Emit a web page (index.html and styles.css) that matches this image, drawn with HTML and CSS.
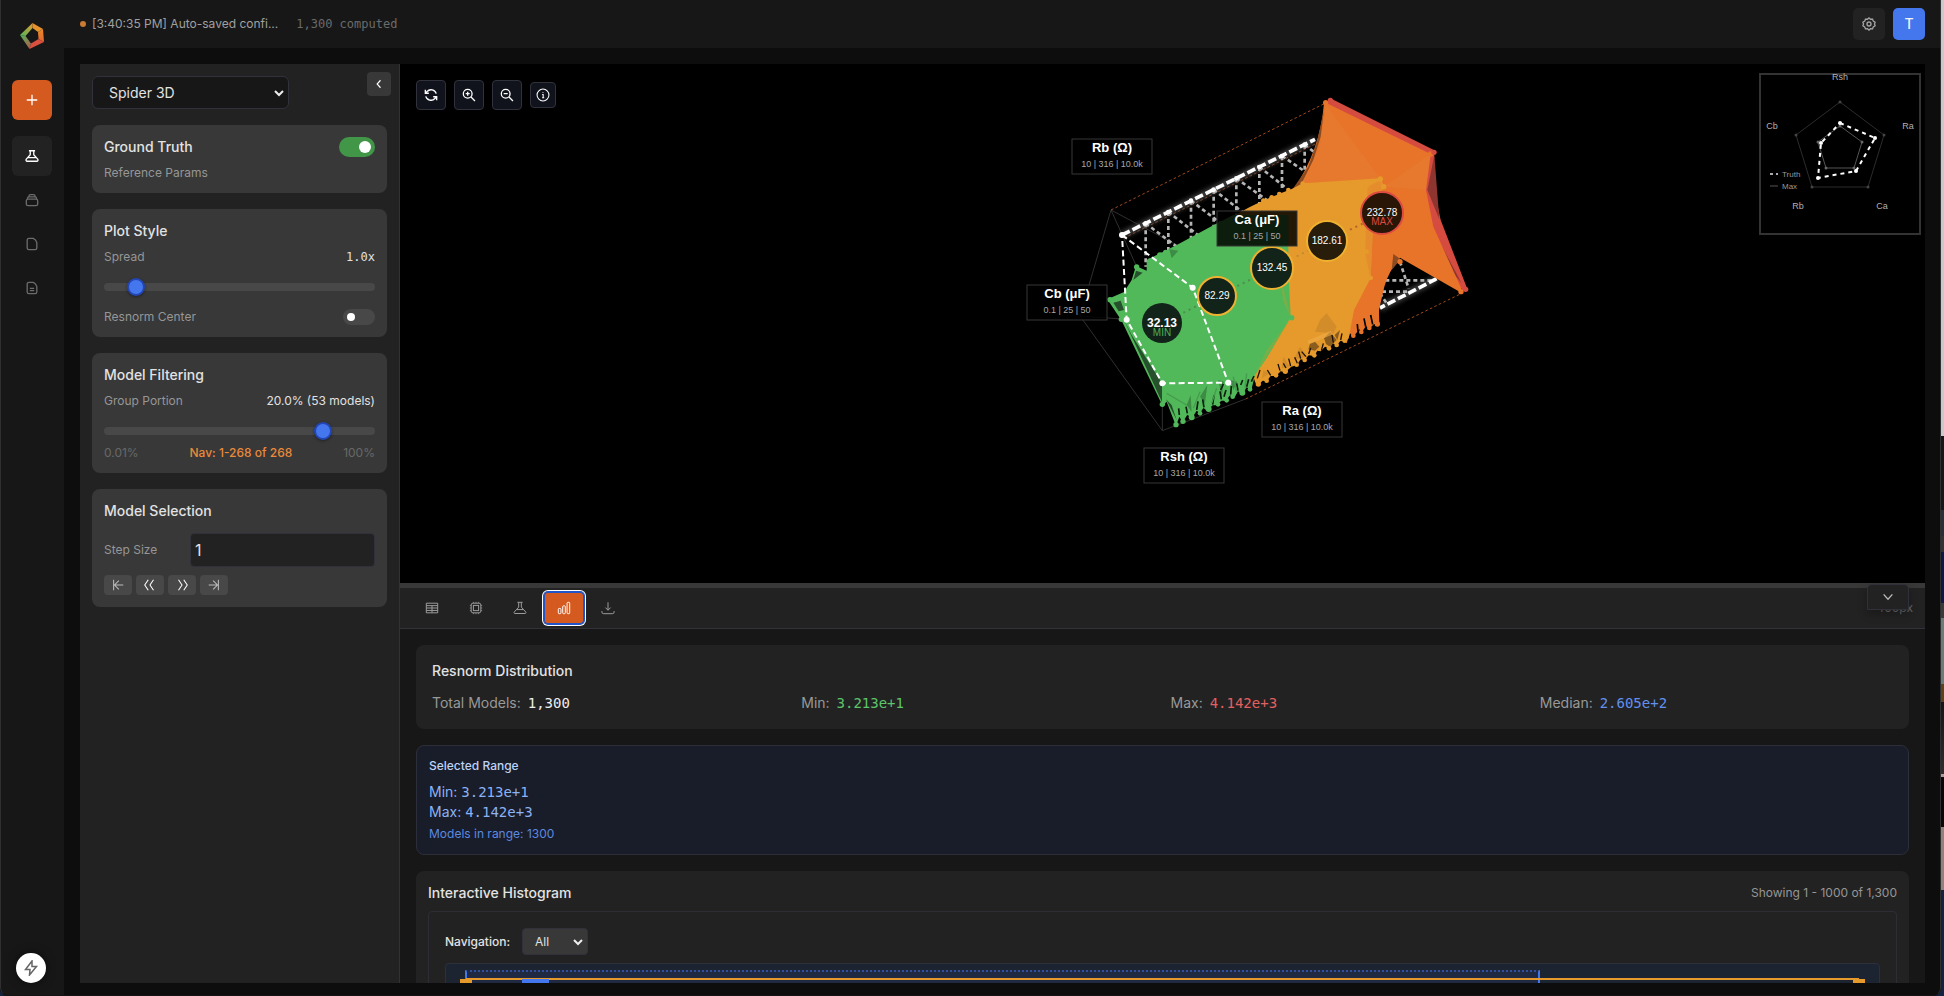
FILE: index.html
```html
<!DOCTYPE html>
<html lang="en">
<head>
<meta charset="utf-8">
<title>Spider 3D</title>
<link rel="stylesheet" href="styles.css">
</head>
<body>
<div class="window">
  <nav class="rail" aria-label="Main">
    <svg class="logo" viewBox="0 0 24 26" aria-hidden="true">
      <defs>
        <linearGradient id="lg1" x1="0" y1="1" x2="1" y2="0"><stop offset="0" stop-color="#4fb85a"/><stop offset="1" stop-color="#e39a2f"/></linearGradient>
        <linearGradient id="lg2" x1="0" y1="0" x2="0" y2="1"><stop offset="0" stop-color="#e8892c"/><stop offset="1" stop-color="#e5652e"/></linearGradient>
        <linearGradient id="lg3" x1="0" y1="0" x2="1" y2="1"><stop offset="0" stop-color="#4fb85a"/><stop offset="1" stop-color="#b8564a"/></linearGradient>
      </defs>
      <path d="M0 12 12.500 0 12.500 5 5.500 13z" fill="url(#lg1)"/>
      <path d="M12.500 0 23 6 18 9 12.500 5z" fill="#e6922d"/>
      <path d="M23 6 24 19 18.500 16 18 9z" fill="url(#lg2)"/>
      <path d="M24 19 9.500 26 11 20.500 18.500 16z" fill="#d9503f"/>
      <path d="M9.500 26 0 12 5.500 13 11 20.500z" fill="url(#lg3)"/>
    </svg>
    <button class="rail-btn rail-add" aria-label="New"><svg class="ico" viewBox="0 0 16 16"><path d="M8 2v12M2 8h12"/></svg></button>
    <button class="rail-btn rail-on" aria-label="Lab"><svg class="ico" viewBox="0 0 16 16"><path d="M4.500 2h7M6 2v4.500L1.500 11.500c-.8 1-.3 2.500 1 2.500h11c1.300 0 1.800-1.500 1-2.500L10 6.500V2M3.500 9.800h9"/></svg></button>
    <button class="rail-btn" aria-label="Collections"><svg class="ico" viewBox="0 0 16 16"><path d="M1.500 9a2 2 0 0 1 2-2h9a2 2 0 0 1 2 2v3.500a2 2 0 0 1-2 2h-9a2 2 0 0 1-2-2zM2.800 7V6a1.800 1.800 0 0 1 1.800-1.600h6.800A1.800 1.800 0 0 1 13.200 6v1M4.500 4.300v-.8a1.800 1.800 0 0 1 1.800-1.600h3.400a1.800 1.800 0 0 1 1.800 1.600v.8"/></svg></button>
    <button class="rail-btn" aria-label="File"><svg class="ico" viewBox="0 0 16 16"><path d="M4.500 1.500h5c2 1 3.500 2.800 4 5v6a2 2 0 0 1-2 2h-7a2 2 0 0 1-2-2v-9a2 2 0 0 1 2-2z"/></svg></button>
    <button class="rail-btn" aria-label="Report"><svg class="ico" viewBox="0 0 16 16"><path d="M4.500 1.500h5c2 1 3.500 2.800 4 5v6a2 2 0 0 1-2 2h-7a2 2 0 0 1-2-2v-9a2 2 0 0 1 2-2zM5.500 8.500h5M5.500 11h5"/></svg></button>
    <button class="bolt" aria-label="Quick actions"><svg viewBox="0 0 16 16"><path d="M9 1 2.500 9.500H7L6.500 15 13.500 6.500H9z"/></svg></button>
  </nav>
  <div class="page">
    <header class="topbar">
      <span class="dot"></span>
      <span class="status">[3:40:35 PM] Auto-saved confi...</span>
      <span class="computed">1,300 computed</span>
      <button class="top-btn" aria-label="Settings"><svg class="ico" viewBox="0 0 16 16"><path d="M8 1 9.700 2.600 12.100 2.500 12.900 4.700 15 6 14.200 8 15 10 12.900 11.300 12.100 13.500 9.700 13.400 8 15 6.300 13.400 3.900 13.500 3.100 11.300 1 10 1.800 8 1 6 3.100 4.700 3.900 2.500 6.300 2.600z"/><circle cx="8" cy="8" r="2.300"/></svg></button>
      <button class="top-btn avatar">T</button>
    </header>
    <main class="main">
      <aside class="side">
        <div class="side-head">
          <select class="mode" aria-label="Visualization"><option>Spider 3D</option></select>
          <button class="collapse" aria-label="Collapse panel"><svg viewBox="0 0 16 16"><path d="M10 3 5.500 8l4.500 5"/></svg></button>
        </div>
        <section class="card">
          <div class="row"><label class="card-title" for="gt">Ground Truth</label><input class="switch" type="checkbox" id="gt" checked></div>
          <div class="muted gap-top">Reference Params</div>
        </section>
        <section class="card">
          <h2 class="card-title">Plot Style</h2>
          <div class="row gap-top"><label class="muted" for="spread">Spread</label><output class="mono-val">1.0x</output></div>
          <input class="slider" type="range" id="spread" min="0" max="100" value="9">
          <div class="row after-slider"><label class="muted" for="rc">Resnorm Center</label><input class="switch small" type="checkbox" id="rc"></div>
        </section>
        <section class="card">
          <h2 class="card-title">Model Filtering</h2>
          <div class="row gap-top"><label class="muted" for="portion">Group Portion</label><output class="val">20.0% (53 models)</output></div>
          <input class="slider" type="range" id="portion" min="0" max="100" value="83">
          <div class="row scale"><span>0.01%</span><span class="nav-note">Nav: 1-268 of 268</span><span>100%</span></div>
        </section>
        <section class="card">
          <h2 class="card-title">Model Selection</h2>
          <div class="row step"><label class="muted" for="step">Step Size</label><input class="step-input" id="step" type="text" value="1"></div>
          <div class="steps">
            <button aria-label="First"><svg viewBox="0 0 16 16"><path d="M3 2v12M14 8H4M9 3 4 8l5 5"/></svg></button>
            <button class="strong" aria-label="Back"><svg viewBox="0 0 16 16"><path d="M6 2 2 8l4 6M12 2 8 8l4 6"/></svg></button>
            <button class="strong" aria-label="Forward"><svg viewBox="0 0 16 16"><path d="m4 2 4 6-4 6M10 2l4 6-4 6"/></svg></button>
            <button aria-label="Last"><svg viewBox="0 0 16 16"><path d="M13 2v12M2 8h10M7 3l5 5-5 5"/></svg></button>
          </div>
        </section>
      </aside>
      <div class="work">
        <section class="canvas">
          <svg class="plot" viewBox="400 64 1525 519" role="img" aria-label="Spider plot">
            <defs><filter id="glow" x="-10%" y="-20%" width="120%" height="140%"><feGaussianBlur stdDeviation="8"/></filter></defs>
            <g transform="translate(1000 80) scale(.33333)" fill="none" stroke-linejoin="round">
              <g stroke="#2f2f2f" stroke-width="3"><path d="M333 390 240 708 487 1052 737 957M240 708 380 718M333 390 487 730M487 1052V730M333 390 540 500"/></g>
              <g stroke="#9c4a1e" stroke-width="3" stroke-dasharray="8 7"><path d="M333 390 975 70M737 957 1385 640M372 474 950 190"/></g>
              <path d="M366 465 945 178M1310 596 1140 684" stroke="#4a4a4a" stroke-width="18" filter="url(#glow)"/>
              <g stroke="#b5b5b5" stroke-width="8" stroke-dasharray="12 9">
                <path d="M437 430V560M505 396V520M573 362V480M641 329V440M709 295V410M778 261V370M846 228V330M914 194V270"/>
                <path d="M437 430 530 500M505 396 600 470M573 362 660 428M641 329 730 398M709 295 800 360M778 261 860 325M846 228 920 278M914 194 940 214M1156 601H1306M1146 635H1230M1200 545 1226 626M1140 640 1160 670"/>
              </g>
              <path d="M366 465 945 178M1310 596 1140 684" stroke="#fff" stroke-width="11" stroke-dasharray="26 9"/>
              <g fill="#fff"><circle cx="437" cy="430" r="7"/><circle cx="505" cy="396" r="7"/><circle cx="573" cy="362" r="7"/><circle cx="641" cy="329" r="7"/><circle cx="709" cy="295" r="7"/><circle cx="778" cy="261" r="7"/><circle cx="846" cy="228" r="7"/><circle cx="914" cy="194" r="7"/></g>

              <path fill="#d54b3f" d="M991 55 1303 211Q1300 330 1322 420L1400 622 1392 634 1320 560 1250 400 1268 240 975 75z"/>
              <path fill="#8e352f" d="M1303 225 1282 330 1318 418zM1305 460 1385 610 1345 560z"/>
              <path fill="#e77429" d="M975 66 985 72 1292 222 1278 330 1300 440 1385 628 1380 636 1200 533Q1165 575 1153 620L1137 690 1138 735 1122 732 1108 746 1098 738 1086 756 1078 748 1060 770 1050 760 1040 790 860 600 880 328Q960 215 972 70z"/>
              <path fill="#8a4a22" d="M972 90 950 190 925 260 876 330 900 320 940 240 962 170zM1180 522 1202 538 1175 570z"/>
              <path fill="#e98338" fill-opacity=".35" d="M978 75 960 200 905 310 1140 296zM1292 222 1152 320 1278 330z"/>
              <g fill="#e77429"><circle cx="977" cy="68" r="8"/><circle cx="1292" cy="222" r="8"/><circle cx="1383" cy="635" r="8"/><circle cx="1132" cy="732" r="8"/><circle cx="1108" cy="744" r="7"/><circle cx="1084" cy="756" r="7"/><circle cx="1060" cy="767" r="7"/><circle cx="1200" cy="545" r="8"/></g>
              <path stroke="#000" stroke-width="5" d="M1118 733 1112 705M1097 740 1092 715M1074 755 1072 732"/>
              <g fill="#d54b3f"><circle cx="991" cy="61" r="8"/><circle cx="1302" cy="217" r="8"/><circle cx="1397" cy="628" r="8"/></g>

              <path fill="#e69a2c" d="M690 415Q760 370 875 327L908 310 1142 295 1152 320 1140 345 1118 460 1112 594 1062 690 1046 775 1034 786 1022 782 1010 796 998 790 988 806 975 800 962 814 952 812 943 828 926 826 914 840 902 838 890 856 874 860 856 876 842 874 828 888 812 888 800 904 788 902 772 918 765 905 700 700z"/>
              <g fill="#8a5c1e"><path d="M972 775 990 755 1010 780 990 800 978 792zM945 785 958 800 945 812 925 808 930 790zM1020 750 1012 780 1004 765z"/></g>
              <g fill="#c4842a" fill-opacity=".6"><path d="M980 700 1010 740 1000 760 945 755 960 720zM900 800 920 830 880 840zM850 830 870 860 845 865zM790 870 808 880 786 895z"/></g>
              <path stroke="#f0ae48" stroke-width="12" opacity=".6" d="M925 788 995 758"/>
              <path fill="#e4872c" fill-opacity=".7" d="M1142 300 1148 330 1118 460 1112 594 1095 520 1103 320z"/>
              <g fill="#e69a2c"><circle cx="1141" cy="297" r="8"/><circle cx="1151" cy="320" r="8"/><circle cx="1100" cy="318" r="7"/><circle cx="908" cy="311" r="7"/><circle cx="1100" cy="515" r="7"/><circle cx="1112" cy="594" r="7"/><circle cx="775" cy="912" r="8"/><circle cx="800" cy="902" r="7"/><circle cx="828" cy="886" r="7"/><circle cx="856" cy="874" r="8"/><circle cx="890" cy="854" r="7"/><circle cx="914" cy="840" r="7"/><circle cx="943" cy="826" r="7"/><circle cx="987" cy="805" r="7"/><circle cx="1010" cy="795" r="7"/><circle cx="1034" cy="782" r="7"/><circle cx="790" cy="362" r="7"/><circle cx="815" cy="352" r="7"/><circle cx="838" cy="342" r="7"/><circle cx="865" cy="330" r="7"/></g>
              <path stroke="#1c1206" stroke-width="4" d="M772 895 780 870M812 886 802 870M840 872 834 852M850 850 858 864M872 858 866 836M884 832 892 850M902 836 896 815M926 822 932 804M964 812 970 790M1000 788 996 765M1022 780 1026 760M905 815 918 830"/>

              <path fill="#52b95b" d="M322 658 372 636 395 600 408 558 440 572 440 540 490 515 540 490 640 436 700 405 865 405 865 560 872 712 800 835 765 885 754 930 740 922 728 942 714 934 704 952 690 946 678 962 664 962 650 976 638 976 622 992 610 984 600 1000 590 992 576 1015 562 1004 548 1027 538 1010 528 1038 500 965 488 978 365 722z"/>
              <path fill="#9aa838" fill-opacity=".5" d="M835 560 872 712 850 665zM870 720 765 885 800 810z"/>
              <g fill="#27502c"><path d="M372 720 395 765 486 910 486 966zM340 668 362 662 372 690 356 694zM408 572 428 578 400 600zM498 958 515 975 530 1020z"/></g>
              <g fill="#3d8c45"><path d="M508 508 535 512 515 535zM600 950 622 915 615 970zM655 900 672 905 665 950zM560 975 572 945 575 995zM690 900 712 905 700 930z"/></g>
              <path stroke="#0c1d0e" stroke-width="5" d="M590 990 594 964M612 982 608 958M638 974 642 946M664 958 660 934M662 930 670 912M692 944 694 918M714 932 710 910M740 920 746 898M754 905 762 888M562 1000 558 980M538 1005 536 985M672 950 678 930M722 915 728 900"/>
              <path stroke="#459c4d" stroke-width="4" d="M500 940 560 975M600 935 580 985M650 925 635 970M700 890 710 935M740 880 735 925"/>
              <g fill="#52b95b"><circle cx="330" cy="659" r="8"/><circle cx="364" cy="718" r="8"/><circle cx="410" cy="561" r="8"/><circle cx="450" cy="543" r="8"/><circle cx="480" cy="526" r="9"/><circle cx="497" cy="517" r="8"/><circle cx="875" cy="713" r="8"/><circle cx="487" cy="973" r="8"/><circle cx="528" cy="1034" r="8"/><circle cx="549" cy="1024" r="8"/><circle cx="575" cy="1012" r="9"/><circle cx="600" cy="1000" r="7"/><circle cx="626" cy="987" r="9"/><circle cx="654" cy="973" r="7"/><circle cx="680" cy="961" r="7"/><circle cx="698" cy="950" r="7"/><circle cx="727" cy="938" r="9"/><circle cx="750" cy="928" r="7"/></g>

              <path stroke="#4e8d4c" stroke-width="6" stroke-dasharray="6 12" d="M550 698 600 673M712 618 755 597"/>
              <path stroke="#bc8a37" stroke-width="6" stroke-dasharray="6 12" d="M890 529 925 512"/>
              <path stroke="#b5642c" stroke-width="6" stroke-dasharray="6 12" d="M1050 449 1090 430"/>
              <path stroke="#fff" stroke-width="6" stroke-dasharray="18 10" d="M366 465 578 623 685 908 487 910 380 719z"/>
              <g fill="#fff"><circle cx="366" cy="465" r="9"/><circle cx="578" cy="623" r="9"/><circle cx="685" cy="908" r="9"/><circle cx="487" cy="910" r="9"/><circle cx="380" cy="719" r="9"/></g>
            </g>
            <g class="nodes">
              <circle cx="1162" cy="323" r="20" fill="#12241a"/>
              <circle cx="1217" cy="296" r="19" fill="#12241a" stroke="#efb12f"/>
              <circle cx="1272" cy="268" r="21" fill="#12241a" stroke="#efb12f"/>
              <circle cx="1327" cy="241" r="20" fill="#281c0a" stroke="#efb12f"/>
              <circle cx="1382" cy="213" r="21" fill="#291606" stroke="#dd4a40"/>
              <text x="1162" y="327" class="node-big">32.13</text><text x="1162" y="336" fill="#4fae58">MIN</text>
              <text x="1217" y="299">82.29</text><text x="1272" y="271">132.45</text><text x="1327" y="244">182.61</text>
              <text x="1382" y="216">232.78</text><text x="1382" y="225" fill="#dd4a40">MAX</text>
            </g>
            <g class="axes">
              <rect x="1072" y="139" width="80" height="35"/><text x="1112" y="152">Rb (Ω)</text><text x="1112" y="167" class="sub">10 | 316 | 10.0k</text>
              <rect x="1217" y="211" width="80" height="35"/><text x="1257" y="224">Ca (μF)</text><text x="1257" y="239" class="sub">0.1 | 25 | 50</text>
              <rect x="1027" y="285" width="80" height="35"/><text x="1067" y="298">Cb (μF)</text><text x="1067" y="313" class="sub">0.1 | 25 | 50</text>
              <rect x="1262" y="402" width="80" height="35"/><text x="1302" y="415">Ra (Ω)</text><text x="1302" y="430" class="sub">10 | 316 | 10.0k</text>
              <rect x="1144" y="448" width="80" height="35"/><text x="1184" y="461">Rsh (Ω)</text><text x="1184" y="476" class="sub">10 | 316 | 10.0k</text>
            </g>
          </svg>
          <div class="tools">
            <button aria-label="Reset view"><svg viewBox="0 0 16 16"><path d="M14 6.500A6.200 6.200 0 0 0 3.500 4L1.500 6M1.500 2v4h4M2 9.500A6.200 6.200 0 0 0 12.500 12l2-2M14.500 14v-4h-4"/></svg></button>
            <button aria-label="Zoom in"><svg viewBox="0 0 16 16"><circle cx="6.500" cy="6.500" r="5"/><path d="m10.300 10.300 4.500 4.500M6.500 4.200v4.600M4.200 6.500h4.600"/></svg></button>
            <button aria-label="Zoom out"><svg viewBox="0 0 16 16"><circle cx="6.500" cy="6.500" r="5"/><path d="m10.300 10.300 4.500 4.500M4.200 6.500h4.600"/></svg></button>
            <button class="info" aria-label="Info"><svg viewBox="0 0 16 16"><circle cx="8" cy="8" r="6.800"/><path d="M7 7.500h1.200v3.700M7 11.200h2.400M8 4.600v.8"/></svg></button>
          </div>
          <svg class="mini" viewBox="0 0 162 162" role="img" aria-label="Reference radar">
            <rect x="1" y="1" width="160" height="160" fill="#000" stroke="#333" stroke-width="2"/>
            <path d="M81 29 125 62 109 114H53L37 62z" fill="none" stroke="#2c2c2c"/>
            <g fill="#444"><circle cx="81" cy="29" r="1.500"/><circle cx="125" cy="62" r="1.500"/><circle cx="109" cy="114" r="1.500"/><circle cx="53" cy="114" r="1.500"/><circle cx="37" cy="62" r="1.500"/></g>
            <path d="M81 53 103 69 95 95H67L59 69z" fill="none" stroke="#555"/>
            <g fill="#666"><circle cx="81" cy="53" r="1.500"/><circle cx="103" cy="69" r="1.500"/><circle cx="95" cy="95" r="1.500"/><circle cx="67" cy="95" r="1.500"/><circle cx="59" cy="69" r="1.500"/></g>
            <path d="M81 50 116 65 97 98 59 105 62 70z" fill="none" stroke="#fff" stroke-width="2" stroke-dasharray="4 4"/>
            <g fill="#fff"><circle cx="81" cy="50" r="2"/><circle cx="116" cy="65" r="2"/><circle cx="97" cy="98" r="2"/><circle cx="59" cy="105" r="2"/><circle cx="62" cy="70" r="2"/></g>
            <path d="M11 101h8" stroke="#aaa" stroke-width="2" stroke-dasharray="3 3"/><path d="M11 113h8" stroke="#2a2a2a" stroke-width="2"/>
            <g class="mini-labels"><text x="81" y="7">Rsh</text><text x="149" y="56">Ra</text><text x="13" y="56">Cb</text><text x="39" y="136">Rb</text><text x="123" y="136">Ca</text></g>
            <g class="mini-key"><text x="23" y="104">Truth</text><text x="23" y="116">Max</text></g>
          </svg>
        </section>
        <section class="dock">
          <div class="resizer"></div>
          <div class="tabs">
            <button aria-label="Table"><svg class="ico" viewBox="0 0 16 16"><path d="M1.500 2.500h13v11h-13zM1.500 5.300h13M1.500 8h13M1.500 10.800h13M8 5.300v8.200"/></svg></button>
            <button aria-label="Processor"><svg class="ico" viewBox="0 0 16 16"><rect x="2.500" y="2.500" width="11" height="11" rx="2"/><rect x="5" y="5" width="6" height="6"/><path d="M5 1v1M8 1v1M11 1v1M5 14v1M8 14v1M11 14v1M1 5h1M1 8h1M1 11h1M14 5h1M14 8h1M14 11h1"/></svg></button>
            <button aria-label="Experiments"><svg class="ico" viewBox="0 0 16 16"><path d="M5 1.500h6M6.500 1.500v5.500l-5 5.500c-.6.800-.2 1.800.8 1.800h11.400c1 0 1.400-1 .8-1.800L9.500 7V1.500M4.500 9.800h7"/></svg></button>
            <button class="tab-on" aria-label="Histogram"><svg class="ico" viewBox="0 0 16 16"><rect x="1.500" y="8.500" width="3" height="6" rx="1"/><rect x="6.500" y="5.500" width="3" height="9" rx="1"/><rect x="11.500" y="1.500" width="3" height="13" rx="1"/></svg></button>
            <button aria-label="Download"><svg class="ico" viewBox="0 0 16 16"><path d="M8 1.500v9M5 7.500l3 3 3-3M1 11.500v1a2 2 0 0 0 2 2h10a2 2 0 0 0 2-2v-1"/></svg></button>
            <span class="dock-size">400px</span>
          </div>
          <button class="dock-toggle" aria-label="Collapse dock"><svg viewBox="0 0 16 16"><path d="m3 5 5 5.500L13 5"/></svg></button>
          <div class="dock-body">
            <section class="box">
              <h2 class="card-title">Resnorm Distribution</h2>
              <div class="stats">
                <div>Total Models: <b class="white">1,300</b></div>
                <div>Min: <b class="green">3.213e+1</b></div>
                <div>Max: <b class="red">4.142e+3</b></div>
                <div>Median: <b class="blue">2.605e+2</b></div>
              </div>
            </section>
            <section class="range">
              <h3>Selected Range</h3>
              <div>Min: <span class="mono">3.213e+1</span></div>
              <div>Max: <span class="mono">4.142e+3</span></div>
              <p>Models in range: 1300</p>
            </section>
            <section class="box hist">
              <div class="row"><h2 class="card-title">Interactive Histogram</h2><span class="muted">Showing 1 - 1000 of 1,300</span></div>
              <div class="hist-frame">
                <div class="hist-nav"><label for="nav">Navigation:</label><select class="nav-select" id="nav"><option>All</option></select></div>
                <div class="chart">
                  <div class="brush"></div>
                  <div class="extent"></div>
                  <div class="handle start"></div>
                  <div class="handle end"></div>
                  <div class="bar"></div>
                </div>
              </div>
            </section>
          </div>
        </section>
      </div>
    </main>
  </div>
</div>
</body>
</html>
```
FILE: styles.css
```css
* { box-sizing: border-box; }
html, body { height: 100%; }
body {
  margin: 0;
  overflow: hidden;
  font: 14px/20px Inter, "Liberation Sans", sans-serif;
  color: #e2e2e2;
  background: linear-gradient(#c9c9c9 0 43.8%, #14161c 43.8% 51.2%, #273038 51.2% 53.8%, #333 53.8% 55.4%, #0c1846 55.4% 60.5%, #3a3a3a 60.5% 62%, #6a7b7b 62% 68.7%, #5e421c 68.7% 70.5%, #15161a 70.5%, #2e2e30 77.7%, #b39c96 77.7% 78%, #08080a 78% 83%, #94817c 83% 89.4%, #13223e 89.4%);
}
h2, h3, p { margin: 0; }
button, input, select { font: inherit; color: inherit; }
button { padding: 0; border: 0; display: grid; place-items: center; cursor: pointer; }
svg { display: block; }
button svg { width: 14px; height: 14px; fill: none; stroke: currentColor; stroke-width: 1.500; }

.window {
  position: relative;
  display: flex;
  height: 100%;
  margin-right: 3px;
  background: #0d0d0d;
  border-radius: 0 0 8px 8px;
  overflow: hidden;
}
.window::after {
  content: "";
  position: absolute;
  inset: -1px 0 0 0;
  border: 1px solid #303030;
  border-bottom-color: #141414;
  border-radius: 0 0 8px 8px;
  pointer-events: none;
}

.rail {
  flex: none;
  width: 64px;
  display: flex;
  flex-direction: column;
  align-items: flex-start;
  gap: 4px;
  padding: 23px 12px 13px;
  background: #171717;
}
.logo { width: 24px; height: 26px; margin: 0 8px 27px; }
.rail-btn { width: 40px; height: 40px; border-radius: 6px; background: none; color: #6c6c6c; }
.rail-add { background: #d55a20; color: #fff; margin-bottom: 12px; }
.rail-on { background: #222; color: #fff; }
.bolt {
  width: 30px; height: 30px; margin: auto 0 0 4px;
  border-radius: 50%; background: #fff; color: #666;
  box-shadow: 0 0 10px #0008;
}
.bolt svg { width: 16px; height: 16px; }

.page { flex: 1; min-width: 0; display: flex; flex-direction: column; }
.topbar {
  flex: none; height: 48px; display: flex; align-items: center;
  padding: 0 16px; background: #171717; font-size: 12px; line-height: 16px;
}
.dot { width: 6px; height: 6px; border-radius: 50%; background: #c97a35; margin-right: 6px; }
.status { color: #a0a0a0; white-space: nowrap; }
.computed { margin: 0 auto 0 18px; color: #6b6b6b; font-family: "DejaVu Sans Mono", monospace; }
.top-btn { width: 32px; height: 32px; margin-left: 8px; border-radius: 5px; background: #222; color: #a5a5a5; }
.avatar { background: #4477ee; color: #f2f2f2; font-size: 14px; font-weight: 500; }

.main { flex: 1; min-height: 0; display: flex; padding: 16px 16px 13px; }
.side {
  flex: none; width: 320px; display: flex; flex-direction: column; gap: 16px;
  padding: 12px; background: #222; border-right: 1px solid #31313a;
}
.side-head { display: flex; justify-content: space-between; align-items: flex-start; margin-right: -4px; height: 33px; }
select {
  appearance: none;
  background: #171717 url("data:image/svg+xml,%3Csvg xmlns='http://www.w3.org/2000/svg' viewBox='0 0 10 10' fill='none' stroke='%23eee' stroke-width='2'%3E%3Cpath d='m1 3 4 4 4-4'/%3E%3C/svg%3E") no-repeat right 4px center / 10px 10px;
  border: 1px solid #31313c;
}
.mode { width: 197px; height: 33px; padding: 0 16px; border-radius: 6px; }
.collapse { width: 24px; height: 24px; margin-top: -4px; border-radius: 4px; background: #383838; color: #fff; }
.collapse svg { width: 12px; height: 12px; }

.card { padding: 12px; border-radius: 8px; background: #383838; }
.card-title { font-size: 14px; line-height: 20px; font-weight: 500; color: #e2e2e2; }
.row { display: flex; justify-content: space-between; align-items: center; }
.gap-top { margin-top: 8px; }
.muted { font-size: 12px; line-height: 16px; color: #969696; }
.val { font-size: 12px; line-height: 16px; }
.mono-val { font: 12px/16px "DejaVu Sans Mono", monospace; }

.switch {
  appearance: none; width: 36px; height: 20px; margin: 0; border-radius: 10px;
  background: #484848; display: flex; align-items: center; padding: 0 4px;
}
.switch::before { content: ""; width: 12px; height: 12px; border-radius: 50%; background: #fff; }
.switch:checked { background: #429648; justify-content: flex-end; }
.switch.small { width: 32px; height: 16px; }
.switch.small::before { width: 8px; height: 8px; }

.slider {
  appearance: none; display: block; width: 100%; height: 8px; margin: 18px 0 10px;
  border-radius: 4px; background: #484848;
}
.slider::-webkit-slider-thumb {
  appearance: none; width: 18px; height: 18px; border-radius: 50%;
  background: #4477ee; border: 2px solid #2446b4; box-shadow: 0 1px 3px #0006;
}
.after-slider { margin-top: 18px; }
.scale { font-size: 12px; line-height: 16px; color: #686868; }
.nav-note { color: #ea8a3a; font-weight: 500; }

.step { margin-top: 12px; }
.step-input {
  width: 185px; height: 34px; padding: 0 4px; font-size: 16px;
  background: #222; border: 1px solid #31313c; border-radius: 4px;
}
.steps { display: flex; gap: 4px; margin-top: 8px; }
.steps button { width: 28px; height: 20px; border-radius: 4px; background: #484848; color: #bbb; }
.steps svg { stroke-width: 1.200; }
.steps .strong { color: #fff; }

.work { flex: 1; min-width: 0; display: flex; flex-direction: column; }
.canvas { position: relative; flex: 1; min-height: 0; background: #000; }
.plot { position: absolute; inset: 0; width: 100%; height: 100%; }
.tools { position: absolute; top: 16px; left: 16px; display: flex; align-items: center; gap: 8px; }
.tools button { width: 30px; height: 30px; border: 1px solid #31313c; border-radius: 4px; background: #10131c; color: #fff; }
.tools .info { width: 26px; height: 26px; }
.tools .info svg { stroke-width: 1.200; }
.mini { position: absolute; top: 9px; right: 4px; width: 162px; height: 162px; overflow: visible; }
.plot text, .mini text { font-family: "Liberation Sans", Arial, sans-serif; text-anchor: middle; }
.nodes circle { stroke-width: 2px; }
.nodes text { font-size: 10px; }
.nodes text:not([fill]) { fill: #fff; }
.nodes .node-big { font-size: 12px; font-weight: 700; }
.axes rect { fill: #000000d9; stroke: #363636; }
.axes text { font-size: 13px; font-weight: 700; fill: #fff; }
.axes .sub { font-size: 9px; font-weight: 400; fill: #a8a8a8; }
.mini-labels text { font-size: 9px; fill: #b0b0b0; }
.mini .mini-key text { font-size: 8px; fill: #999; text-anchor: start; }

.dock { position: relative; flex: none; height: 400px; display: flex; flex-direction: column; background: #171717; overflow: hidden; }
.resizer { flex: none; height: 5px; background: #383838; }
.tabs {
  flex: none; height: 41px; display: flex; align-items: center; gap: 4px;
  padding: 0 12px; background: #222; border-bottom: 1px solid #31313a;
}
.tabs button { width: 40px; height: 32px; border-radius: 4px; background: none; color: #a0a0a0; }
.tabs svg { stroke-width: 1.100; }
.tabs .tab-on { background: #d55a20; color: #fff; box-shadow: inset 0 0 0 1px #1f55c8, 0 0 0 1px #1f55c8, 0 0 0 2px #fff; }
.dock-size { margin-left: auto; font-size: 12px; color: #666; }
.dock-toggle {
  position: absolute; top: 1px; right: 16px; width: 42px; height: 26px;
  background: #222; color: #bbb; border: 1px solid #31313c; border-radius: 5px 5px 0 0;
  box-shadow: 0 4px 10px #0004;
}
.dock-body { flex: 1; min-height: 0; overflow: hidden; display: flex; flex-direction: column; gap: 16px; padding: 16px 16px 0; }
.box { flex: none; padding: 16px; border-radius: 8px; background: #222; }
.stats { display: grid; grid-template-columns: repeat(4, 1fr); gap: 16px; margin-top: 12px; color: #999; }
.stats b { margin-left: 3px; font: 14px/20px "DejaVu Sans Mono", monospace; }
.white { color: #eee; }
.green { color: #5cc56a; }
.red { color: #e26060; }
.blue { color: #6191ef; }
.mono { font-family: "DejaVu Sans Mono", monospace; }
.range {
  flex: none; padding: 12px; border: 1px solid #2c2f3a; border-radius: 8px;
  background: #191c29; color: #8ab2f4;
}
.range h3 { margin-bottom: 8px; font-size: 12px; line-height: 16px; font-weight: 500; color: #bdd3f8; }
.range p { margin-top: 4px; font-size: 12px; line-height: 16px; color: #5b8ae0; }
.hist { padding: 12px; }
.hist-frame { margin-top: 8px; padding: 16px; border: 1px solid #2d2d36; border-radius: 4px; }
.hist-nav { display: flex; align-items: center; gap: 12px; font-size: 12px; }
.hist-nav label { font-weight: 500; }
.nav-select { width: 66px; height: 27px; padding: 0 12px; border-radius: 4px; background-color: #383838; }
.chart { position: relative; height: 220px; margin-top: 8px; border: 1px solid #2d2f3a; border-radius: 4px; background: #1d2431; }
.brush {
  position: absolute; top: 6px; left: 19px; width: 75%; height: 190px;
  background: #1f2a42; border: solid #4477ee; border-width: 2px 2px 0; border-top: 2px dotted #31509c;
}
.extent { position: absolute; top: 14px; left: 20px; right: 20px; height: 2px; background: #e69a2c; }
.handle { position: absolute; top: 15px; width: 12px; height: 12px; background: #e69a2c; }
.start { left: 14px; }
.end { right: 14px; }
.bar { position: absolute; top: 15px; left: 76px; width: 27px; height: 160px; background: #4477ee; }
```
